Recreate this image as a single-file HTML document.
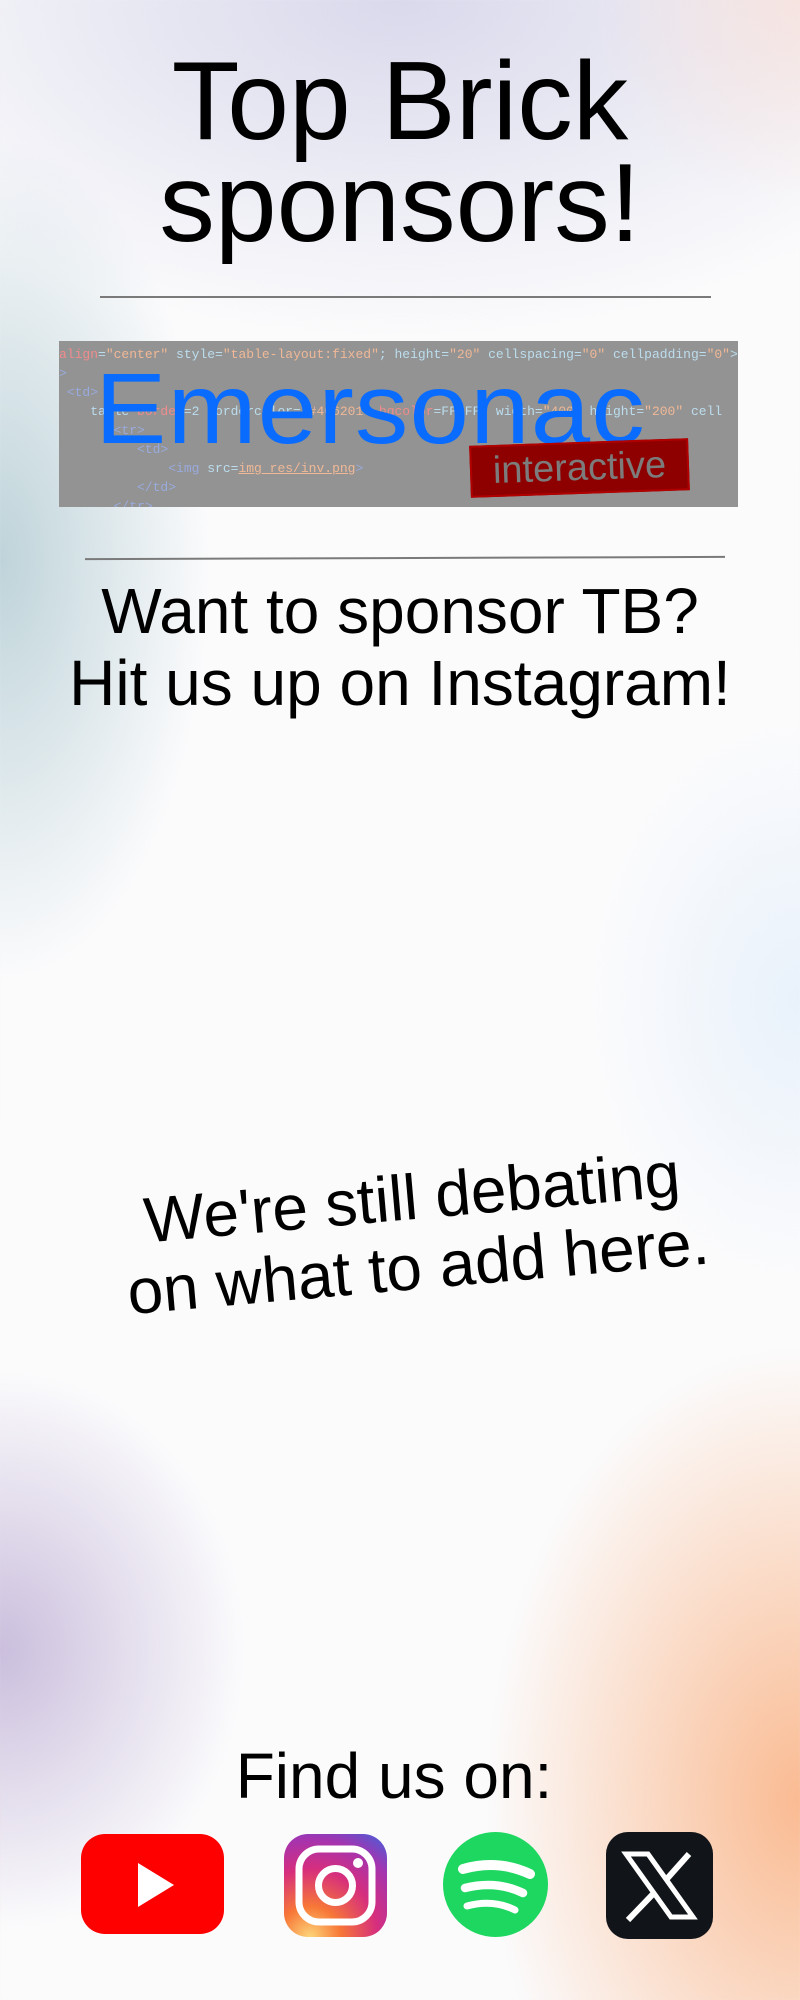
<!DOCTYPE html>
<html><head><meta charset="utf-8"><style>
html,body{margin:0;padding:0}
body{width:800px;height:2000px;position:relative;overflow:hidden;font-family:"Liberation Sans",Arial,sans-serif;color:#000;
background:
radial-gradient(ellipse 300px 600px at 0px 560px, rgba(150,185,195,.6), transparent 70%),
radial-gradient(ellipse 350px 400px at 0px 1650px, rgba(170,150,200,.6), transparent 70%),
radial-gradient(ellipse 450px 650px at 800px 1800px, rgba(250,180,135,.9), transparent 70%),
radial-gradient(ellipse 300px 300px at 800px 0px, rgba(250,220,210,.6), transparent 70%),
radial-gradient(ellipse 800px 450px at 400px 0px, rgba(215,215,235,.95), transparent 75%),
radial-gradient(ellipse 300px 400px at 800px 1000px, rgba(220,235,250,.6), transparent 70%),
#fbfbfc;}
.t{position:absolute;left:0;width:800px;text-align:center;white-space:nowrap}
.hr{position:absolute;height:2px;background:#7a7a7a}
.banner{position:absolute;left:59px;top:341px;width:679px;height:166px;background:#939393;overflow:hidden}
.code{position:absolute;left:0;top:4px;font-family:"Liberation Mono",monospace;font-size:13px;line-height:19px;white-space:pre;color:#bde}
.r{color:#f08c8c}.o{color:#f0b896}.b{color:#9ad}
.em{position:absolute;left:36px;top:8px;font-size:100px;color:#0a6cff;line-height:120px;transform:scaleX(1.07);transform-origin:left;letter-spacing:1px}
.int{position:absolute;left:411px;top:101px;width:219px;height:52px;background:#8e0000;border:2px solid #b00000;box-sizing:border-box;transform:rotate(-2deg);color:#7c7c7c;font-size:38px;line-height:48px;text-align:center}
.icon{position:absolute}
</style></head><body>
<div class="t" style="top:50px;font-size:111px;line-height:102px">Top Brick<br>sponsors!</div>
<div class="hr" style="left:100px;top:296px;width:611px"></div>
<div class="banner">
<div class="code"><span class="r">align</span>=<span class="o">"center"</span> style=<span class="o">"table-layout:fixed"</span>; height=<span class="o">"20"</span> cellspacing=<span class="o">"0"</span> cellpadding=<span class="o">"0"</span>>
<span class="b">></span>
 <span class="b">&lt;td></span>
    table <span class="r">border</span>=2 bordercolor=<span class="o">"#406201"</span> <span class="r">bgcolor</span>=FFFFFF width=<span class="o">"400"</span> height=<span class="o">"200"</span> cell
       <span class="b">&lt;tr></span>
          <span class="b">&lt;td></span>
              <span class="b">&lt;img</span> src=<span class="o" style="text-decoration:underline">img_res/inv.png</span><span class="b">></span>
          <span class="b">&lt;/td></span>
       <span class="b">&lt;/tr></span></div>
<div class="em">Emersonac</div>
<div class="int">interactive</div>
</div>
<div class="hr" style="left:85px;top:557px;width:640px;transform:rotate(-0.2deg)"></div>
<div class="t" style="top:575px;font-size:64px;line-height:72px">Want to sponsor TB?<br>Hit us up on Instagram!</div>
<div class="t" style="top:1162px;font-size:64px;line-height:70px;left:15px;transform:rotate(-5deg)">We're still debating<br>on what to add here.</div>
<div class="t" style="top:1740px;font-size:64px;line-height:72px;left:-6px">Find us on:</div>
<svg class="icon" style="left:81px;top:1834px" width="143" height="100" viewBox="0 0 143 100"><rect width="143" height="100" rx="24" fill="#ff0000"/><path d="M57 29 L93 51 L57 73Z" fill="#fff"/></svg>
<svg class="icon" style="left:284px;top:1834px" width="103" height="103" viewBox="0 0 103 103"><defs><radialGradient id="ig" cx="0.25" cy="1" r="1.2"><stop offset="0" stop-color="#fdd57a"/><stop offset="0.25" stop-color="#f77737"/><stop offset="0.55" stop-color="#d62e7d"/><stop offset="0.8" stop-color="#a334b0"/><stop offset="1" stop-color="#4f5bd5"/></radialGradient></defs><rect width="103" height="103" rx="24" fill="url(#ig)"/><rect x="15" y="15" width="73" height="73" rx="20" fill="none" stroke="#fff" stroke-width="7"/><circle cx="51.5" cy="51.5" r="17" fill="none" stroke="#fff" stroke-width="7"/><circle cx="74" cy="29" r="5" fill="#fff"/></svg>
<svg class="icon" style="left:443px;top:1832px" width="105" height="105" viewBox="0 0 105 105"><circle cx="52.5" cy="52.5" r="52.5" fill="#1ed760"/><g fill="none" stroke="#fff" stroke-linecap="round"><path d="M20 37 Q55 27 87 42" stroke-width="10"/><path d="M22 56 Q53 48 80 61" stroke-width="8.5"/><path d="M24 74 Q50 67 72 78" stroke-width="7"/></g></svg>
<svg class="icon" style="left:606px;top:1832px" width="107" height="107" viewBox="0 0 107 107"><rect width="107" height="107" rx="22" fill="#111418"/><path d="M20 22 L42 22 L87 85 L65 85Z" fill="none" stroke="#fff" stroke-width="5"/><path d="M83 22 L59 49 M48 61 L22 88" stroke="#fff" stroke-width="6"/></svg>
</body></html>
